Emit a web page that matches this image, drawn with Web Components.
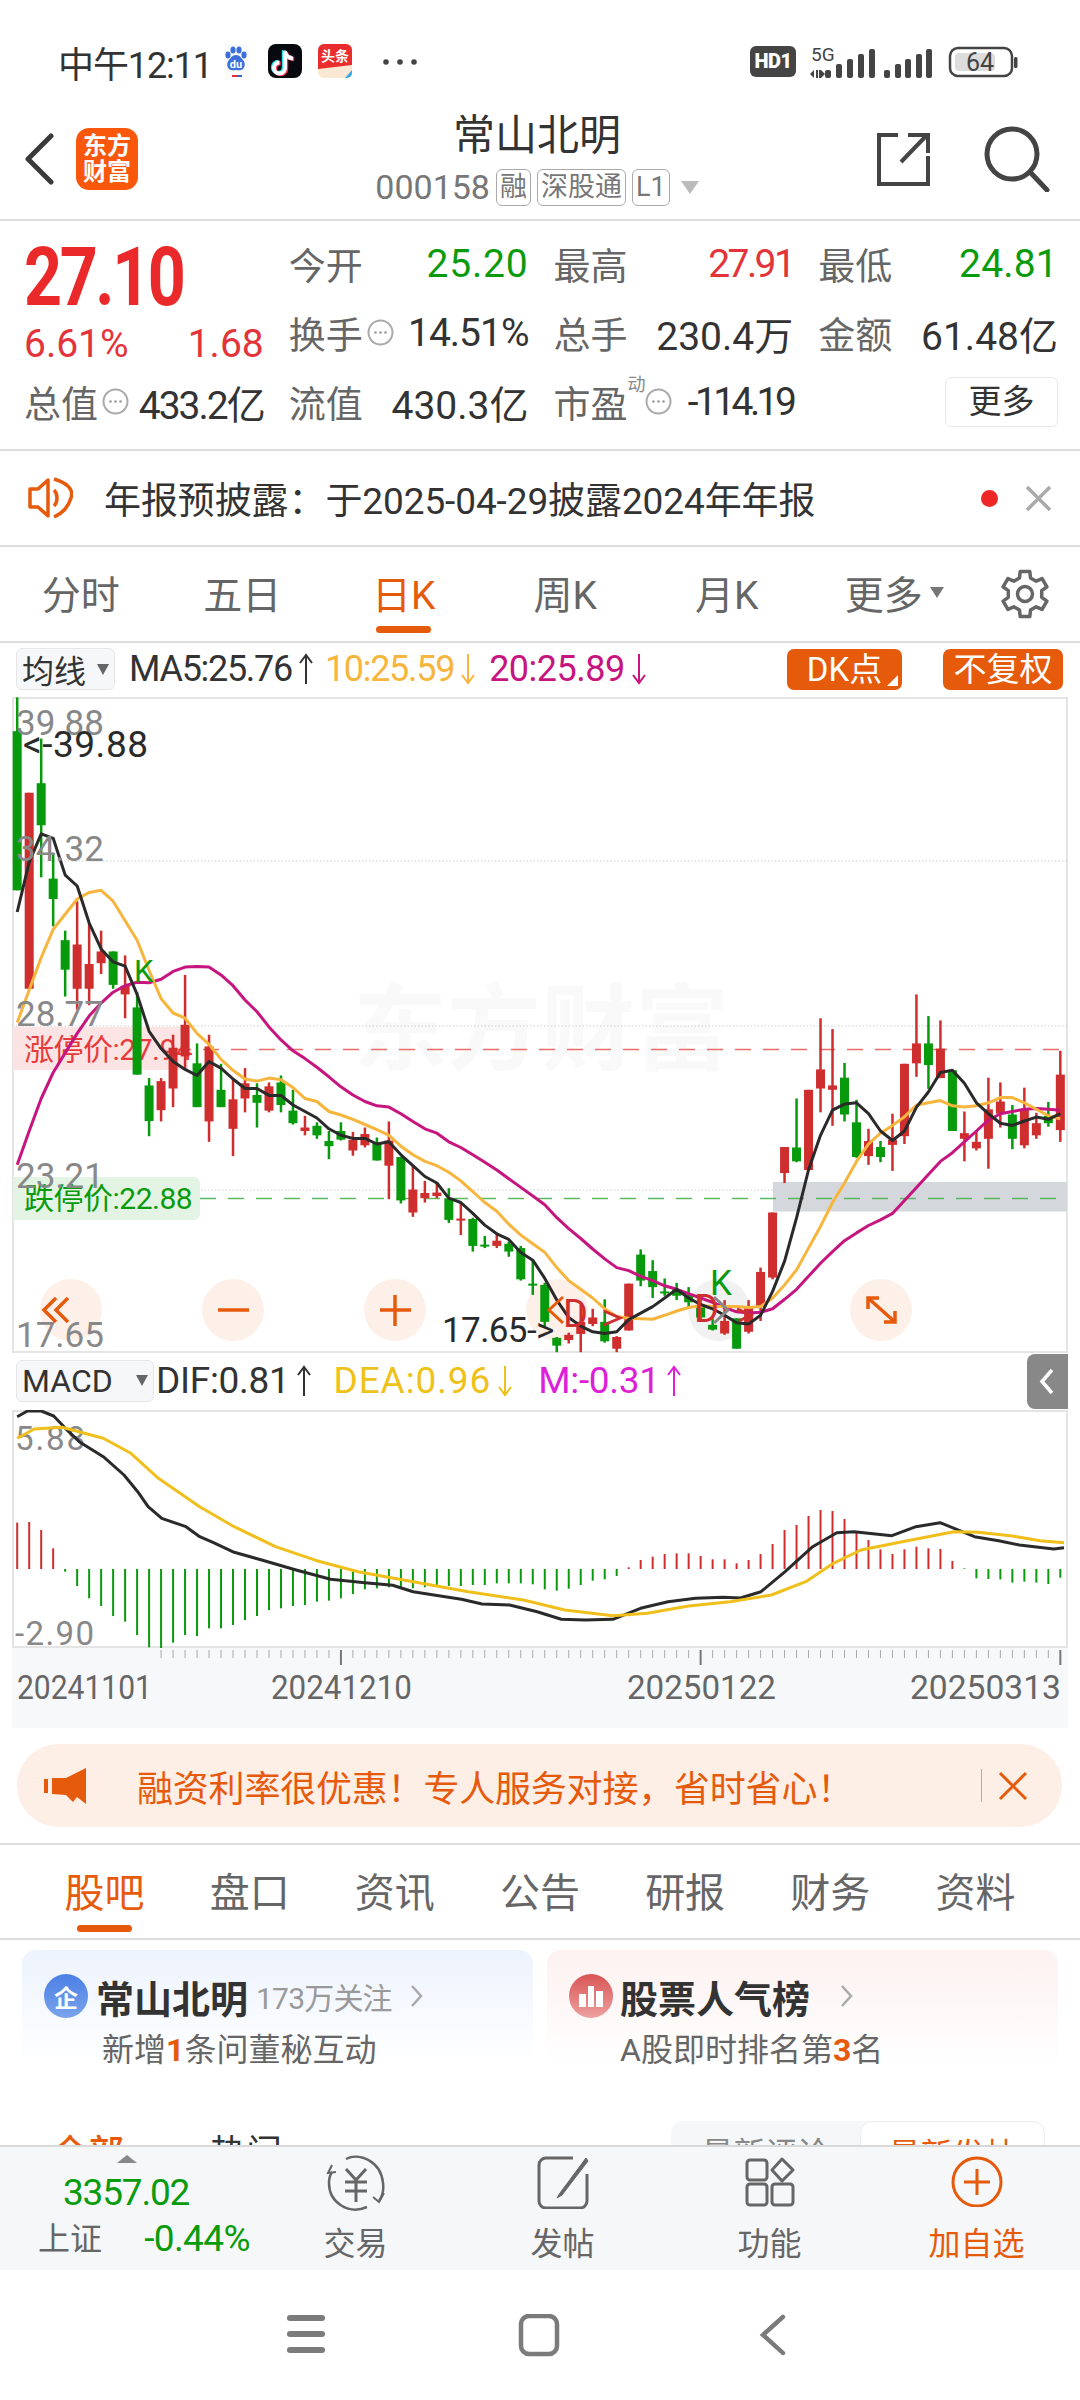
<!DOCTYPE html>
<html lang="zh">
<head>
<meta charset="utf-8">
<title>常山北明</title>
<style>
  html, body { margin: 0; padding: 0; background: #fff; }
  body { width: 1080px; height: 2400px; overflow: hidden; font-family: Roboto, "Noto Sans CJK SC", sans-serif; color: #333; }
</style>
</head>
<body>
<status-bar></status-bar>
<stock-header></stock-header>
<quote-panel></quote-panel>
<notice-bar>年报预披露：于2025-04-29披露2024年年报</notice-bar>
<tab-strip variant="period">
  <tab-item>分时</tab-item><tab-item>五日</tab-item><tab-item active>日K</tab-item><tab-item>周K</tab-item><tab-item>月K</tab-item><tab-item style="padding-left:12px">更多<more-caret></more-caret></tab-item>
  <gear-icon slot="end"></gear-icon>
</tab-strip>
<ma-legend></ma-legend>
<kline-chart></kline-chart>
<macd-legend></macd-legend>
<macd-chart></macd-chart>
<date-axis></date-axis>
<ad-banner>融资利率很优惠！专人服务对接，省时省心！</ad-banner>
<tab-strip variant="info">
  <tab-item active>股吧</tab-item><tab-item>盘口</tab-item><tab-item>资讯</tab-item><tab-item>公告</tab-item><tab-item>研报</tab-item><tab-item>财务</tab-item><tab-item>资料</tab-item>
</tab-strip>
<info-cards></info-cards>
<list-filter></list-filter>
<bottom-bar></bottom-bar>
<system-nav></system-nav>

<script>
const ORANGE = '#e65a0c';
const GREY_TEXT = '#666';

class ShadowEl extends HTMLElement {
  constructor() {
    super();
    this.attachShadow({ mode: 'open' });
  }
}

class StatusBar extends ShadowEl {
  connectedCallback() {
    this.shadowRoot.innerHTML = `
      <style>
        :host { display: flex; align-items: center; height: 100px; padding: 24px 62px 0 58px; box-sizing: border-box; color: #333; }
        .time { font-size: 36px; letter-spacing: -1.1px; width: 152px; white-space: nowrap; }
        svg { display: block; }
        .left { display: flex; align-items: center; margin-left: 15px; }
        .spacer { flex: 1; }
      </style>
      <span class="time">中午12:11</span>
      <div class="left">
        <svg width="200" height="36" viewBox="0 0 200 36">
          <g transform="translate(-5 0)">
            <rect x="0" y="0" width="30" height="36" rx="6" fill="#fafafa"/>
            <g fill="#3d6fdc">
              <ellipse cx="8" cy="11" rx="2.6" ry="3.4"/><ellipse cx="13" cy="6" rx="2.6" ry="3.6"/><ellipse cx="19" cy="6" rx="2.6" ry="3.6"/><ellipse cx="24" cy="11" rx="2.6" ry="3.4"/>
              <path d="M16 11c4 0 5 3 7 5 3 3 2 9-2 10-2 .6-3 0-5 0s-3 .6-5 0c-4-1-5-7-2-10 2-2 3-5 7-5z"/>
            </g>
            <text x="16" y="24" font-size="11" font-weight="700" fill="#fff" text-anchor="middle">du</text>
            <rect x="12" y="31" width="5" height="2" fill="#d33"/><rect x="17" y="31" width="5" height="2" fill="#36c"/>
          </g>
          <rect x="43" y="0" width="34" height="34" rx="8" fill="#08090f"/>
          <g fill="none" stroke-width="4">
            <path d="M60 7v17a5.500 5.500 0 1 1-5.500-5.500M60 8c1 4 4 6 8 6.500" stroke="#29e6ee" transform="translate(-1.200 -.8)"/>
            <path d="M60 7v17a5.500 5.500 0 1 1-5.500-5.500M60 8c1 4 4 6 8 6.500" stroke="#fb2c55" transform="translate(1.200 .8)"/>
            <path d="M60 7v17a5.500 5.500 0 1 1-5.500-5.500M60 8c1 4 4 6 8 6.500" stroke="#fff"/>
          </g>
          <rect x="93" y="0" width="34" height="34" rx="6" fill="#fbe8d4"/>
          <path d="M93 6a6 6 0 0 1 6-6h22a6 6 0 0 1 6 6v15l-34 4z" fill="#ea2c2c"/>
          <text x="110" y="17" font-size="14" font-weight="700" fill="#fff" text-anchor="middle">头条</text>
          <path d="M120 34l7-8v3a5 5 0 0 1-5 5z" fill="#3da6e8"/>
          <circle cx="161" cy="18" r="2.800" fill="#444"/><circle cx="175" cy="18" r="2.800" fill="#444"/><circle cx="189" cy="18" r="2.800" fill="#444"/>
        </svg>
      </div>
      <div class="spacer"></div>
      <svg width="268" height="36" viewBox="0 0 268 36">
        <rect x="0" y="2" width="46" height="31" rx="6" fill="#444"/>
        <text x="23" y="24" font-size="20" font-weight="900" fill="#fff" text-anchor="middle" letter-spacing="-.5">HD1</text>
        <text x="61" y="17" font-size="19" fill="#444">5G</text>
        <path d="M65 26l-4 4 4 4zM67 26h2v8h-2zM72 26l4 4-4 4zM70 26h2v8h-2z" fill="#444" transform="translate(-1 0)"/>
        <g fill="#444">
          <rect x="75" y="26" width="6" height="8" rx="2"/><rect x="86" y="20" width="6" height="14" rx="2"/><rect x="97" y="15" width="6" height="19" rx="2"/><rect x="108" y="10" width="6" height="24" rx="2"/><rect x="119" y="5" width="6" height="29" rx="2"/>
          <rect x="134" y="26" width="6" height="8" rx="2"/><rect x="145" y="20" width="6" height="14" rx="2"/><rect x="155" y="15" width="6" height="19" rx="2"/><rect x="166" y="10" width="6" height="24" rx="2"/><rect x="176" y="5" width="6" height="29" rx="2"/>
        </g>
        <rect x="200" y="4" width="62" height="28" rx="8" fill="none" stroke="#444" stroke-width="2.500"/>
        <rect x="205" y="9" width="40" height="18" rx="4" fill="#ddd"/>
        <text x="230" y="27" font-size="25" fill="#444" text-anchor="middle">64</text>
        <rect x="264" y="13" width="3.500" height="11" rx="1.500" fill="#444"/>
      </svg>`;
  }
}

class StockHeader extends ShadowEl {
  connectedCallback() {
    this.shadowRoot.innerHTML = `
      <style>
        :host { display: grid; grid-template-columns: 1fr auto 1fr; align-items: center; height: 121px; padding: 0 30px 2px 24px; box-sizing: border-box; border-bottom: 2px solid #ddd; }
        .left { display: flex; align-items: center; gap: 22px; }
        .logo { width: 62px; height: 62px; border-radius: 13px; background: #f9570c; color: #fff; font-size: 24px; line-height: 26px; font-weight: 700; text-align: center; padding-top: 5px; box-sizing: border-box; }
        .mid { display: flex; flex-direction: column; align-items: center; }
        h1 { margin: 0 0 7px; font-size: 42px; line-height: 50px; font-weight: 400; color: #333; }
        .code { display: flex; align-items: center; gap: 6px; color: #777; font-size: 34px; line-height: 38px; }
        .tag { border: 1.500px solid #aaa; border-radius: 6px; font-size: 27px; line-height: 35px; padding: 0 3px; color: #777; }
        .caret { width: 0; height: 0; border: 9px solid transparent; border-top: 13px solid #bbb; border-bottom: 0; margin-left: 5px; }
        .right { display: flex; justify-content: flex-end; align-items: center; gap: 54px; }
        svg { display: block; }
      </style>
      <div class="left">
        <svg width="30" height="52" viewBox="0 0 30 52"><path d="M27 3L4 26l23 23" fill="none" stroke="#3a3a3a" stroke-width="5" stroke-linecap="round" stroke-linejoin="round"/></svg>
        <div class="logo">东方<br>财富</div>
      </div>
      <div class="mid">
        <h1>常山北明</h1>
        <div class="code">000158<span class="tag">融</span><span class="tag">深股通</span><span class="tag">L1</span><span class="caret"></span></div>
      </div>
      <div class="right">
        <svg width="54" height="54" viewBox="0 0 54 54" fill="none" stroke="#444" stroke-width="4"><path d="M22 3H3v49h49V24M25 30L51 3M32 3h20v18"/></svg>
        <svg width="66" height="66" viewBox="0 0 66 66" fill="none" stroke="#444" stroke-width="5"><circle cx="28" cy="28" r="25"/><path d="M46 46l17 18" stroke-linecap="round"/></svg>
      </div>`;
  }
}

class HintDot extends ShadowEl {
  connectedCallback() {
    this.shadowRoot.innerHTML = `
      <style>:host { display: inline-block; width: 27px; height: 27px; } svg { display: block; }</style>
      <svg width="27" height="27" viewBox="0 0 27 27"><circle cx="13.500" cy="13.500" r="12" fill="#fff" stroke="#aaa" stroke-width="2"/><g fill="#999"><circle cx="8.500" cy="13.500" r="1.300"/><circle cx="13.500" cy="13.500" r="1.300"/><circle cx="18.500" cy="13.500" r="1.300"/></g></svg>`;
  }
}

class QuoteCell extends ShadowEl {
  connectedCallback() {
    const label = this.getAttribute('label');
    const tone = { down: '#0a9b0d', up: '#e2343a' }[this.getAttribute('tone')] || '#333';
    this.shadowRoot.innerHTML = `
      <style>
        :host { display: flex; align-items: center; height: 69px; white-space: nowrap; font-size: 39px; }
        .label { color: ${GREY_TEXT}; font-size: 37px; }
        .extra { display: inline-flex; align-items: center; margin-left: 4px; }
        .value { margin-left: auto; color: ${tone}; letter-spacing: ${this.getAttribute('ls') || 0}px; }
      </style>
      <span class="label">${label}</span><span class="extra"><slot name="extra"></slot></span><span class="value"><slot></slot></span>`;
  }
}

class QuotePanel extends ShadowEl {
  connectedCallback() {
    this.shadowRoot.innerHTML = `
      <style>
        :host { display: grid; grid-template-columns: repeat(4, 1fr); column-gap: 25px; height: 230px; padding: 8px 22px 13px 24px; box-sizing: border-box; border-bottom: 2px solid #ddd; }
        .price { height: 69px; font-size: 82px; line-height: 82px; font-weight: 700; color: #ea2a2a; margin: 7px 0 -7px; letter-spacing: -3px; transform: scaleX(.81); transform-origin: left center; white-space: nowrap; }
        .change { display: flex; justify-content: space-between; align-items: center; height: 69px; font-size: 39px; color: #e2343a; padding-top: 22px; box-sizing: border-box; }
        .sup { font-size: 18px; color: #888; align-self: flex-start; margin: -18px -1px 0 -4px; }
        .more { justify-self: end; align-self: center; width: 113px; height: 50px; border: 1.500px solid #e8e8e8; border-radius: 6px; box-sizing: border-box; font-size: 33px; line-height: 48px; text-align: center; color: #333; }
        span[slot=extra] { display: inline-flex; align-items: center; }
      </style>
      <div class="price">27.10</div>
      <quote-cell label="今开" tone="down" ls=".8">25.20</quote-cell>
      <quote-cell label="最高" tone="up" ls="-2.6">27.91</quote-cell>
      <quote-cell label="最低" tone="down" ls=".2">24.81</quote-cell>
      <div class="change"><span>6.61%</span><span>1.68</span></div>
      <quote-cell label="换手" ls="-1"><hint-dot slot="extra"></hint-dot>14.51%</quote-cell>
      <quote-cell label="总手">230.4万</quote-cell>
      <quote-cell label="金额">61.48亿</quote-cell>
      <quote-cell label="总值" ls="-2"><hint-dot slot="extra"></hint-dot>433.2亿</quote-cell>
      <quote-cell label="流值">430.3亿</quote-cell>
      <quote-cell label="市盈" ls="-3.6"><span slot="extra"><span class="sup">动</span><hint-dot></hint-dot></span>-114.19</quote-cell>
      <div class="more">更多</div>`;
  }
}

class NoticeBar extends ShadowEl {
  connectedCallback() {
    this.shadowRoot.innerHTML = `
      <style>
        :host { display: flex; align-items: center; height: 96px; padding: 0 28px; box-sizing: border-box; border-bottom: 2px solid #ddd; font-size: 37px; color: #333; }
        svg { display: block; flex: none; }
        .text { flex: 1; margin-left: 31px; white-space: nowrap; letter-spacing: -.1px; }
        .dot { width: 17px; height: 17px; border-radius: 50%; background: #ee2626; margin-right: 27px; }
      </style>
      <svg width="45" height="42" viewBox="0 0 45 42" fill="none" stroke="${ORANGE}" stroke-width="3.500"><path d="M2 12h8L20 3v36L10 30H2z" stroke-linejoin="round"/><path d="M26 13c4 4 4 12 0 16M26 2c13 4 20 10 17 19s-7 14-17 19"/></svg>
      <span class="text"><slot></slot></span>
      <span class="dot"></span>
      <svg width="27" height="27" viewBox="0 0 27 27" fill="none" stroke="#aaa" stroke-width="3.500"><path d="M2 2l23 23M25 2L2 25"/></svg>`;
  }
}

class TabStrip extends ShadowEl {
  connectedCallback() {
    const info = this.getAttribute('variant') === 'info';
    this.shadowRoot.innerHTML = `
      <style>
        :host { display: flex; align-items: stretch; height: ${info ? 95 : 96}px; padding: 0 ${info ? '32px' : '0'}; box-sizing: border-box; border-bottom: 2px solid #ddd; --tab-size: ${info ? 40 : 39}px; --line-bottom: ${info ? 6 : 8}px; }
        .tabs { display: grid; grid-auto-flow: column; grid-auto-columns: 1fr; flex: ${info ? '1' : 'none'}; width: ${info ? 'auto' : '969px'}; }
        .end { flex: 1; display: flex; align-items: center; justify-content: center; }
      </style>
      <div class="tabs"><slot></slot></div>
      ${info ? '' : '<div class="end"><slot name="end"></slot></div>'}`;
  }
}

class TabItem extends ShadowEl {
  connectedCallback() {
    this.shadowRoot.innerHTML = `
      <style>
        :host { display: flex; justify-content: center; align-items: center; position: relative; font-size: var(--tab-size); color: ${GREY_TEXT}; white-space: nowrap; padding-bottom: 4px; box-sizing: border-box; }
        :host([active]) { color: ${ORANGE}; }
        :host([active])::after { content: ""; position: absolute; left: 50%; bottom: var(--line-bottom); width: 55px; height: 7px; margin-left: -27.500px; border-radius: 4px; background: ${ORANGE}; }
      </style><slot></slot>`;
  }
}

class MoreCaret extends ShadowEl {
  connectedCallback() {
    this.shadowRoot.innerHTML = `<style>:host { display: inline-block; width: 0; height: 0; margin-left: 7px; border: 7px solid transparent; border-top: 11px solid #777; border-bottom: 0; }</style>`;
  }
}

class GearIcon extends ShadowEl {
  connectedCallback() {
    const cx = 25, cy = 25;
    const pts = [];
    for (let i = 0; i < 6; i++) {
      const a = i * Math.PI / 3 - Math.PI / 2;
      [[-0.33, 17], [-0.21, 23], [0.21, 23], [0.33, 17]].forEach(([d, r]) => {
        pts.push((cx + r * Math.cos(a + d)).toFixed(1) + ',' + (cy + r * Math.sin(a + d)).toFixed(1));
      });
    }
    this.shadowRoot.innerHTML = `
      <style>:host { display: block; width: 50px; height: 50px; } svg { display: block; }</style>
      <svg width="50" height="50" viewBox="0 0 50 50" fill="none" stroke="#666" stroke-width="3.500" stroke-linejoin="round"><polygon points="${pts.join(' ')}"/><circle cx="25" cy="25" r="7.500"/></svg>`;
  }
}

class TrendArrow extends ShadowEl {
  connectedCallback() {
    const dir = this.getAttribute('dir');
    const path = dir === 'up' ? 'M8 31V2M2 10l6-8 6 8' : 'M8 1v29M2 22l6 8 6-8';
    this.shadowRoot.innerHTML = `
      <style>:host { display: inline-block; width: 16px; height: 32px; margin: 0 ${this.getAttribute('gap') || 11}px 0 6px; flex: none; } svg { display: block; }</style>
      <svg width="16" height="32" viewBox="0 0 16 32" fill="none" stroke="${this.getAttribute('color')}" stroke-width="2"><path d="${path}"/></svg>`;
  }
}

class PickBox extends ShadowEl {
  connectedCallback() {
    this.shadowRoot.innerHTML = `
      <style>
        :host { display: flex; align-items: center; justify-content: space-between; height: 42px; box-sizing: border-box; padding: 0 5px; background: #f6f7f9; border: 1px solid #e6e6e6; border-radius: 6px; font-size: 32px; color: #333; white-space: nowrap; }
        i { display: block; width: 0; height: 0; border: 6px solid transparent; border-top: 11px solid #666; border-bottom: 0; }
      </style><slot></slot><i></i>`;
  }
}

class MaLegend extends ShadowEl {
  connectedCallback() {
    this.shadowRoot.innerHTML = `
      <style>
        :host { display: flex; align-items: center; height: 54px; padding: 0 17px 2px 16px; box-sizing: border-box; font-size: 36px; letter-spacing: -1.300px; white-space: nowrap; }
        pick-box { width: 99px; margin-right: 14px; letter-spacing: 0; }
        .btn { background: ${ORANGE}; color: #fff; border-radius: 7px; height: 41px; line-height: 41px; text-align: center; font-size: 33px; letter-spacing: 0; position: relative; }
        .dk { width: 115px; margin-left: auto; margin-right: 41px; }
        .dk::after { content: ""; position: absolute; right: 4px; bottom: 4px; border: 0 solid transparent; border-width: 0 0 11px 11px; border-bottom-color: #fff; }
        .fq { width: 120px; }
      </style>
      <pick-box>均线</pick-box>
      <span style="color:#333">MA5:25.76</span><trend-arrow dir="up" color="#333"></trend-arrow>
      <span style="color:#f7b53d">10:25.59</span><trend-arrow dir="down" color="#f7b53d" gap="13"></trend-arrow>
      <span style="color:#c7157f;letter-spacing:-.5px">20:25.89</span><trend-arrow dir="down" color="#c7157f"></trend-arrow>
      <span class="btn dk">DK点</span><span class="btn fq">不复权</span>`;
  }
}

// y values are read off the reference in crop units, converted in kx / ky below
const CANDLES = [
  ['g',40,118,485,485],['r',260,260,712,712],['g',135,238,335,455],['g',400,458,505,568],['g',578,600,668,730],['r',510,610,712,760],['r',560,655,712,750],['r',578,626,653,678],['g',626,626,703,712],['r',635,705,725,780],
  ['g',720,755,910,910],['g',918,935,1017,1052],['r',918,925,992,1018],['r',818,848,942,985],['r',680,795,868,895],['g',838,884,985,985],['r',818,845,1018,1065],['g',885,945,985,985],['r',920,967,1035,1098],['r',895,930,965,997],
  ['g',930,957,975,1032],['r',928,937,993,997],['g',912,928,980,997],['g',945,993,1022,1025],['r',1005,1032,1040,1050],['g',1020,1028,1050,1058],['g',1040,1063,1075,1105],['g',1020,1040,1060,1062],['r',1042,1060,1085,1097],['r',1032,1047,1073,1078],
  ['g',1055,1068,1108,1108],['r',1018,1062,1120,1197],['g',1100,1100,1200,1207],['r',1120,1175,1228,1238],['r',1155,1183,1195,1205],['r',1160,1182,1190,1195],['g',1172,1195,1245,1252],['r',1205,1242,1245,1280],['g',1240,1243,1305,1318],['g',1282,1302,1306,1310],
  ['r',1275,1293,1305,1310],['g',1295,1300,1318,1330],['g',1305,1310,1382,1385],['g',1340,1392,1396,1418],['g',1390,1395,1480,1490],['g',1515,1517,1535,1550],['r',1505,1510,1522,1530],['r',1440,1480,1508,1550],['r',1450,1470,1485,1490],['g',1428,1480,1525,1528],
  ['r',1513,1515,1542,1550],['r',1392,1392,1500,1500],['g',1313,1325,1385,1398],['g',1338,1363,1400,1425],['g',1380,1410,1414,1420],['g',1390,1405,1420,1430],['g',1400,1418,1435,1450],['g',1420,1445,1470,1480],['g',1470,1487,1498,1500],['r',1430,1478,1507,1510],
  ['g',1472,1472,1542,1542],['r',1430,1445,1503,1507],['r',1355,1365,1445,1478],['r',1228,1228,1378,1382],['r',1077,1077,1137,1160],['g',965,1078,1110,1112],['r',945,945,1130,1130],['r',780,898,942,997],['r',805,935,945,1028],['g',883,917,1002,1018],
  ['g',968,1020,1100,1102],['r',1035,1063,1098,1118],['g',1063,1077,1100,1112],['r',1000,1060,1072,1132],['r',885,885,1052,1070],['r',725,838,884,915],['g',775,838,888,943],['r',785,850,918,918],['g',900,900,1040,1040],['r',995,1045,1058,1110],
  ['r',1040,1065,1080,1085],['r',917,990,1058,1127],['r',928,972,1000,1032],['g',980,1002,1058,1082],['r',940,990,1073,1080],['r',998,1022,1050,1058],['g',973,1005,1022,1030],['r',855,910,1038,1065]
];
const MA5 = [535,420,355,365,450,475,560,620,650,660,725,810,850,880,898,912,880,895,920,942,942,958,958,980,995,1010,1035,1050,1057,1057,1070,1065,1095,1120,1145,1160,1195,1205,1230,1257,1277,1290,1320,1338,
  1380,1430,1470,1490,1503,1507,1503,1475,1460,1445,1425,1405,1425,1440,1450,1465,1482,1485,1465,1410,1340,1240,1130,1050,992,978,975,1000,1040,1062,1040,985,950,905,900,930,975,1000,1022,1027,1017,1008,1013,1000];
const MA10 = [790,715,640,575,540,505,490,485,510,555,600,670,735,768,780,815,840,875,900,920,925,918,922,940,965,972,995,1003,1013,1025,1037,1050,1075,1095,1110,1120,1135,1155,1180,1205,1225,1255,1280,1300,
  1320,1355,1385,1405,1425,1450,1468,1472,1473,1474,1465,1455,1447,1443,1445,1445,1445,1447,1445,1425,1395,1360,1310,1260,1205,1160,1110,1070,1045,1027,1007,980,975,970,982,985,982,975,963,963,975,990,1005,1012];
const MA20 = [1118,1040,965,905,860,815,775,745,720,705,697,698,690,672,662,661,662,680,705,738,765,800,830,855,873,893,915,938,957,972,982,985,1000,1018,1035,1045,1065,1078,1095,1112,1130,1150,1170,1190,
  1210,1240,1265,1288,1312,1335,1355,1362,1375,1385,1397,1405,1415,1425,1435,1447,1457,1460,1458,1450,1428,1405,1375,1345,1318,1293,1275,1258,1245,1230,1200,1170,1140,1110,1090,1065,1040,1015,1000,995,990,988,990,992];

const kx = k => 17.2 + 11.99 * k;
const ky = z => 680 + z / 2.306;
const linePts = ys => ys.map((z, k) => kx(k).toFixed(1) + ',' + ky(z).toFixed(1)).join(' ');

class KlineChart extends ShadowEl {
  connectedCallback() {
    const sticks = CANDLES.map(([c, w1, b1, b2, w2], k) => {
      const col = c === 'r' ? '#cf2e2e' : '#079a0c';
      const x = kx(k);
      return `<rect x="${x - 1.25}" y="${ky(w1)}" width="2.5" height="${ky(w2) - ky(w1)}" fill="${col}"/>` +
             `<rect x="${x - 4.5}" y="${ky(b1)}" width="9" height="${Math.max(ky(b2) - ky(b1), 2)}" fill="${col}"/>`;
    }).join('');
    const buttons = [71, 233, 395, 557, 719, 881].map((x, i) =>
      `<circle cx="${x}" cy="1310" r="31" fill="${i === 4 ? '#f1f1f1' : '#fdf0e9'}"/>`).join('');
    const grid = [861, 1026, 1190].map(y => `<line x1="12" x2="1067" y1="${y}" y2="${y}" stroke="#ccc" stroke-dasharray="1.500 2"/>`).join('');
    this.shadowRoot.innerHTML = `
      <style>
        :host { display: block; height: 656px; margin: 0 12px; width: 1056px; }
        svg { display: block; }
        text { font-family: Roboto, "Noto Sans CJK SC", sans-serif; }
      </style>
      <svg width="1056" height="656" viewBox="12 697 1056 656">
        <rect x="13" y="698" width="1054" height="654" fill="#fff" stroke="#e4e4e4" stroke-width="2"/>
        <text x="353" y="1063" font-size="94" font-weight="700" fill="#f9f9f9">东方财富</text>
        ${grid}
        <rect x="773" y="1182" width="294" height="29.500" fill="#d4d7dc"/>
        <rect x="13" y="1027" width="175" height="43" fill="#fde4e4"/>
        <path d="M13 1177h181a6 6 0 0 1 6 6v31a6 6 0 0 1-6 6H13z" fill="#e4f4e4"/>
        <line x1="175" x2="1067" y1="1049.500" y2="1049.500" stroke="#ee6b6b" stroke-width="1.500" stroke-dasharray="16 12"/>
        <line x1="200" x2="1067" y1="1198.500" y2="1198.500" stroke="#5cb85c" stroke-width="1.500" stroke-dasharray="16 12"/>
        ${buttons}
        <text x="24" y="1060" font-size="30" fill="#e83a3a" letter-spacing="-.5">涨停价:27.94</text>
        <text x="24" y="1209" font-size="30" fill="#0a9b0d" letter-spacing="-.5">跌停价:22.88</text>
        ${sticks}
        <polyline points="${linePts(MA20)}" fill="none" stroke="#c7157f" stroke-width="3" stroke-linejoin="round"/>
        <polyline points="${linePts(MA10)}" fill="none" stroke="#f7b53d" stroke-width="3" stroke-linejoin="round"/>
        <polyline points="${linePts(MA5)}" fill="none" stroke="#2a2a2a" stroke-width="3" stroke-linejoin="round"/>
        <g font-size="35" fill="#888">
          <text x="16" y="735">39.88</text><text x="16" y="861">34.32</text><text x="16" y="1026">28.77</text><text x="16" y="1188">23.21</text><text x="16" y="1347">17.65</text>
        </g>
        <text x="23" y="757" font-size="37" fill="#2a2a2a" letter-spacing=".5">&lt;-39.88</text>
        <text x="442" y="1342" font-size="35" fill="#2a2a2a" letter-spacing="-.6">17.65-&gt;</text>
        <text x="134" y="982" font-size="31" fill="#0a9b0d">K</text>
        <text x="710" y="1295" font-size="35" fill="#0a9b0d">K</text>
        <text x="563" y="1327" font-size="38" fill="#cf2e2e">D</text>
        <text x="694" y="1322" font-size="38" fill="#cf2e2e">D</text>
        <g fill="none" stroke-width="3">
          <path d="M563 1297l-14 13 14 13" stroke="${ORANGE}"/>
          <path d="M714 1297l14 13-14 13" stroke="#888"/>
          <path d="M604 1325l16-7-16-7" stroke="#cf2e2e"/>
          <path d="M737 1309l14 6-12 6" stroke="#cf2e2e"/>
          <path d="M72 1298l-12 12 12 12M84 1298l-12 12 12 12" stroke="${ORANGE}" stroke-width="3.500" transform="translate(-16 0)"/>
          <path d="M218 1310h31M380 1310h31M395 1295v31" stroke="${ORANGE}" stroke-width="3.500"/>
          <path d="M868 1298l27 24M868 1309v-11h11M895 1311v11h-11" stroke="${ORANGE}" stroke-width="3.500"/>
        </g>
      </svg>`;
  }
}

class MacdLegend extends ShadowEl {
  connectedCallback() {
    this.shadowRoot.innerHTML = `
      <style>
        :host { display: flex; align-items: center; position: relative; height: 57px; padding: 0 0 2px 16px; box-sizing: border-box; font-size: 37px; letter-spacing: -.3px; white-space: nowrap; }
        pick-box { width: 138px; margin-right: 2px; letter-spacing: 0; }
        .handle { position: absolute; right: 12px; top: 1px; width: 41px; height: 55px; border-radius: 8px 0 0 8px; background: #888; }
        svg { display: block; }
        .handle svg { margin: 14px 0 0 12px; }
      </style>
      <pick-box>MACD</pick-box>
      <span style="color:#333">DIF:0.81</span><trend-arrow dir="up" color="#333" gap="22"></trend-arrow>
      <span style="color:#eec21a;letter-spacing:.9px">DEA:0.96</span><trend-arrow dir="down" color="#eec21a" gap="25"></trend-arrow>
      <span style="color:#dd1fd8">M:-0.31</span><trend-arrow dir="up" color="#dd1fd8"></trend-arrow>
      <div class="handle"><svg width="16" height="27" viewBox="0 0 16 27" fill="none" stroke="#fff" stroke-width="3.500"><path d="M13 2L3 13.500 13 25"/></svg></div>`;
  }
}

const BAR_TOPS = [518,516,540,595,665,708,745,768,798,815,855,892,897,878,855,858,835,835,825,810,798,780,775,768,765,755,752,745,732,718,715,712,715,715,712,710,708,708,705,705,700,700,700,703,718,722,716,705,692,688,678,
  652,630,620,612,610,610,618,628,628,640,630,612,582,540,525,498,480,483,507,545,570,598,612,598,590,595,597,633,655,685,687,688,698,695,698,702,683];
const DIF = [[25,200],[40,183],[60,183],[78,198],[95,235],[115,275],[150,320],[180,375],[200,425],[215,470],[235,505],[270,530],[290,560],[310,578],[340,607],[380,630],[430,660],[480,688],[530,698],[570,706],[600,725],[630,735],[670,748],[700,762],[740,765],[780,785],[815,808],[850,810],[890,808],[930,775],[970,755],[1010,745],[1050,742],[1075,744],[1105,725],[1140,665],[1180,590],[1215,548],[1240,545],[1295,557],[1330,530],[1365,518],[1415,560],[1450,572],[1480,585],[1530,597],[1545,593]];
const DEA = [[25,265],[50,237],[90,232],[150,265],[190,310],[230,385],[290,470],[340,530],[400,590],[460,632],[520,665],[600,695],[680,725],[760,750],[820,780],[890,797],[940,790],[1000,768],[1060,755],[1120,735],[1170,695],[1210,640],[1250,600],[1310,575],[1385,545],[1420,547],[1470,558],[1510,572],[1545,578]];
const macdPts = list => list.map(([x, y]) => (x / 1.452).toFixed(1) + ',' + (1350 + y / 3).toFixed(1)).join(' ');

class MacdChart extends ShadowEl {
  connectedCallback() {
    const bars = BAR_TOPS.map((z, k) => {
      const y = 1350 + z / 3;
      const base = 1569;
      const red = k < 4 || (k > 50 && k < 79);
      return `<rect x="${kx(k) - 1}" y="${Math.min(y, base)}" width="2" height="${Math.abs(y - base)}" fill="${red ? '#cf2e2e' : '#0a9b0d'}"/>`;
    }).join('');
    this.shadowRoot.innerHTML = `
      <style>
        :host { display: block; height: 238px; width: 1056px; margin: 0 12px; }
        svg { display: block; }
        text { font-family: Roboto, sans-serif; }
      </style>
      <svg width="1056" height="238" viewBox="12 1410 1056 238">
        <rect x="13" y="1411" width="1054" height="236" fill="#fff" stroke="#e4e4e4" stroke-width="2"/>
        ${bars}
        <g font-size="33" fill="#888"><text x="15" y="1450" textLength="70">5.88</text><text x="15" y="1645" textLength="79">-2.90</text></g>
        <polyline points="${macdPts(DIF)}" fill="none" stroke="#2a2a2a" stroke-width="3" stroke-linejoin="round"/>
        <polyline points="${macdPts(DEA)}" fill="none" stroke="#f0bf1c" stroke-width="3" stroke-linejoin="round"/>
      </svg>`;
  }
}

class DateAxis extends ShadowEl {
  connectedCallback() {
    let ticks = '';
    for (let k = 12; k < 88; k++) {
      const major = k === 27 || k === 57 || k === 87;
      ticks += `<line x1="${kx(k)}" x2="${kx(k)}" y1="1650" y2="${major ? 1665 : 1658}" stroke="${major ? '#777' : '#aaa'}" stroke-width="${major ? 2 : 1}"/>`;
    }
    const labels = [[17, 135, '20241101'], [271, 141, '20241210'], [627, 149, '20250122'], [910, 151, '20250313']]
      .map(([x, w, t]) => `<text x="${x}" y="1699" textLength="${w}" lengthAdjust="spacingAndGlyphs">${t}</text>`).join('');
    this.shadowRoot.innerHTML = `
      <style>
        :host { display: block; height: 80px; width: 1056px; margin: 0 12px 16px; background: #f7f8fa; }
        svg { display: block; }
        text { font-family: Roboto, sans-serif; font-size: 33px; fill: #666; }
      </style>
      <svg width="1056" height="80" viewBox="12 1648 1056 80">${ticks}${labels}</svg>`;
  }
}

class AdBanner extends ShadowEl {
  connectedCallback() {
    this.shadowRoot.innerHTML = `
      <style>
        :host { display: block; padding: 0 18px 16px 17px; border-bottom: 2px solid #ddd; }
        .pill { display: flex; align-items: center; height: 83px; padding: 0 34px 0 27px; box-sizing: border-box; border-radius: 42px; background: #fdeee6; font-size: 36px; color: ${ORANGE}; white-space: nowrap; }
        svg { display: block; flex: none; }
        .text { flex: 1; margin-left: 51px; letter-spacing: -.2px; }
        .sep { width: 1px; height: 33px; background: #d9a184; margin-right: 16px; }
      </style>
      <div class="pill">
        <svg width="42" height="36" viewBox="0 0 42 36" fill="${ORANGE}"><rect x="0" y="11" width="4" height="14"/><path d="M8 10h14L42 0v36l-9-7-4 5-7-7-14-1z"/></svg>
        <span class="text"><slot></slot></span>
        <span class="sep"></span>
        <svg width="30" height="30" viewBox="0 0 30 30" fill="none" stroke="${ORANGE}" stroke-width="3"><path d="M2 2l26 26M28 2L2 28"/></svg>
      </div>`;
  }
}

class InfoCard extends ShadowEl {
  connectedCallback() {
    const blue = this.getAttribute('tone') === 'blue';
    this.shadowRoot.innerHTML = `
      <style>
        :host { display: block; height: 115px; border-radius: 14px 14px 0 0; padding-top: 24px; box-sizing: border-box; background: linear-gradient(${blue ? '#edf3fd' : '#fdf1f1'}, #fff); }
        .top { display: flex; align-items: center; height: 44px; padding-left: 22px; white-space: nowrap; }
        .badge { flex: none; width: 44px; height: 44px; border-radius: 50%; margin-right: ${blue ? 8 : 7}px; background: linear-gradient(${blue ? '#4b7fe6, #7aa3ea' : '#d95555, #eda0a0'}); color: #fff; display: flex; align-items: center; justify-content: center; font-size: 24px; font-weight: 700; }
        b { font-size: 38px; font-weight: 700; color: #333; }
        .note { font-size: 30px; color: #999; margin-left: 8px; letter-spacing: -.8px; }
        svg { display: block; flex: none; }
        .sub { margin: 14px 0 0 ${blue ? 80 : 73}px; font-size: 32px; line-height: 36px; color: ${GREY_TEXT}; white-space: nowrap; }
        em { font-style: normal; font-weight: 700; color: ${ORANGE}; }
      </style>
      <div class="top"><span class="badge"><slot name="badge"></slot></span><b>${this.getAttribute('heading')}</b><span class="note">${this.getAttribute('note') || ''}</span>
        <svg width="13" height="24" viewBox="0 0 13 24" fill="none" stroke="#aaa" stroke-width="2.500" style="margin-left:${blue ? 18 : 22}px"><path d="M2 2l9 10-9 10"/></svg></div>
      <div class="sub">${this.getAttribute('sub')}</div>`;
  }
}

class InfoCards extends ShadowEl {
  connectedCallback() {
    this.shadowRoot.innerHTML = `
      <style>
        :host { display: grid; grid-template-columns: 511px 511px; column-gap: 14px; height: 171px; padding: 10px 22px 0; box-sizing: border-box; }
        svg { display: block; }
      </style>
      <info-card tone="blue" heading="常山北明" note="173万关注" sub="新增<em>1</em>条问董秘互动"><span slot="badge">企</span></info-card>
      <info-card heading="股票人气榜" sub="A股即时排名第<em>3</em>名">
        <svg slot="badge" width="26" height="24" viewBox="0 0 26 24" fill="#fff"><rect x="1" y="10" width="7" height="13"/><rect x="10" y="2" width="6" height="21"/><rect x="18" y="7" width="7" height="16"/></svg>
      </info-card>`;
  }
}

class ListFilter extends ShadowEl {
  connectedCallback() {
    this.shadowRoot.innerHTML = `
      <style>
        :host { display: flex; height: 34px; overflow: hidden; padding: 0 35px 0 52px; box-sizing: border-box; align-items: flex-start; font-size: 36px; line-height: 54px; }
        .tab { margin-right: 86px; color: #333; padding-top: 16px; }
        .seg { margin: 10px 0 0 auto; display: flex; width: 374px; height: 60px; border-radius: 12px 12px 0 0; background: #f6f7f9; }
        .seg span { flex: 1; text-align: center; font-size: 32px; color: #888; padding-top: 6px; }
        .seg .on { flex: none; width: 185px; background: #fff; border: 1.500px solid #eee; border-radius: 12px; color: ${ORANGE}; box-sizing: border-box; }
      </style>
      <span class="tab" style="color:${ORANGE};font-weight:500">全部</span><span class="tab">热门</span>
      <div class="seg"><span>最新评论</span><span class="on">最新发帖</span></div>`;
  }
}

class BottomItem extends ShadowEl {
  connectedCallback() {
    const on = this.hasAttribute('on');
    this.shadowRoot.innerHTML = `
      <style>
        :host { display: flex; flex-direction: column; align-items: center; width: 207px; padding-top: 8px; font-size: 32px; line-height: 40px; color: ${on ? ORANGE : GREY_TEXT}; white-space: nowrap; }
        .ico { height: 58px; margin-bottom: 11px; }
      </style>
      <div class="ico"><slot name="icon"></slot></div><slot></slot>`;
  }
}

class BottomBar extends ShadowEl {
  connectedCallback() {
    this.shadowRoot.innerHTML = `
      <style>
        :host { display: flex; height: 125px; background: #f6f7f9; border-top: 2px solid #d9d9d9; box-sizing: border-box; padding-left: 252px; position: relative; }
        .index { position: absolute; left: 38px; top: 8px; width: 212px; }
        .tri { width: 0; height: 0; margin-left: 79px; border: 10px solid transparent; border-bottom: 8px solid #888; border-top: 0; }
        .price { margin: 9px 0 0 25px; font-size: 37px; line-height: 42px; color: #0a9b0d; letter-spacing: -1.200px; }
        .row { display: flex; justify-content: space-between; margin-top: 5px; font-size: 32px; line-height: 40px; color: ${GREY_TEXT}; }
        .row span + span { color: #0a9b0d; font-size: 37px; letter-spacing: -.6px; }
        svg { display: block; }
      </style>
      <div class="index"><div class="tri"></div><div class="price">3357.02</div><div class="row"><span>上证</span><span>-0.44%</span></div></div>
      <bottom-item>
        <svg slot="icon" width="62" height="56" viewBox="0 0 62 56" fill="none" stroke="#666" stroke-width="2.500"><path d="M21 4C34-3 56 6 58 28c1 8-1 14-4 18M42 52C24 60 4 48 4 28c0-4 1-8 3-11"/><path d="M7 10l-4 8 8-1M59 38l-5 9-6-5" stroke-width="2"/><path d="M21 14l10 11 10-11M20 27h22M20 36h22M31 25v22" stroke-width="3"/></svg>
        交易
      </bottom-item>
      <bottom-item>
        <svg slot="icon" width="52" height="54" viewBox="0 0 52 54" fill="none" stroke="#666" stroke-width="3"><path d="M36 3H9a7 7 0 0 0-7 7v36a7 7 0 0 0 7 7h34a7 7 0 0 0 7-7V19"/><path d="M49 3L23 38l-3 5 5-3L51 6z" fill="#666" stroke-width="1"/></svg>
        发帖
      </bottom-item>
      <bottom-item>
        <svg slot="icon" width="50" height="50" viewBox="0 0 50 50" fill="none" stroke="#666" stroke-width="3" style="margin-top:2px"><rect x="2" y="3" width="20" height="20" rx="3"/><path d="M37 2l11 11-11 11-10-11z" stroke-linejoin="round"/><rect x="2" y="27" width="20" height="21" rx="3"/><rect x="27" y="27" width="21" height="21" rx="3"/></svg>
        功能
      </bottom-item>
      <bottom-item on>
        <svg slot="icon" width="52" height="52" viewBox="0 0 52 52" fill="none" stroke="${ORANGE}" stroke-width="3"><circle cx="26" cy="27" r="24"/><path d="M13 27h26M26 14v26"/></svg>
        加自选
      </bottom-item>`;
  }
}

class SystemNav extends ShadowEl {
  connectedCallback() {
    this.shadowRoot.innerHTML = `
      <style>
        :host { display: flex; height: 130px; padding: 44px 0 0 287px; box-sizing: border-box; background: #fff; align-items: flex-start; }
        svg { display: block; }
      </style>
      <svg width="500" height="44" viewBox="0 0 500 44" fill="#7b7b7b">
        <rect x="0" y="1" width="38" height="6" rx="3"/><rect x="0" y="17" width="38" height="6" rx="3"/><rect x="0" y="33" width="38" height="6" rx="3"/>
        <rect x="234" y="2" width="36" height="38" rx="8" fill="none" stroke="#7b7b7b" stroke-width="4.500"/>
        <path d="M496 3l-20 19 20 19" transform="scale(1 .95)" fill="none" stroke="#7b7b7b" stroke-width="4.500" stroke-linecap="round"/>
      </svg>`;
  }
}

customElements.define('status-bar', StatusBar);
customElements.define('stock-header', StockHeader);
customElements.define('hint-dot', HintDot);
customElements.define('quote-cell', QuoteCell);
customElements.define('quote-panel', QuotePanel);
customElements.define('notice-bar', NoticeBar);
customElements.define('tab-strip', TabStrip);
customElements.define('tab-item', TabItem);
customElements.define('more-caret', MoreCaret);
customElements.define('gear-icon', GearIcon);
customElements.define('trend-arrow', TrendArrow);
customElements.define('pick-box', PickBox);
customElements.define('ma-legend', MaLegend);
customElements.define('kline-chart', KlineChart);
customElements.define('macd-legend', MacdLegend);
customElements.define('macd-chart', MacdChart);
customElements.define('date-axis', DateAxis);
customElements.define('ad-banner', AdBanner);
customElements.define('info-card', InfoCard);
customElements.define('info-cards', InfoCards);
customElements.define('list-filter', ListFilter);
customElements.define('bottom-item', BottomItem);
customElements.define('bottom-bar', BottomBar);
customElements.define('system-nav', SystemNav);
</script>
</body>
</html>
